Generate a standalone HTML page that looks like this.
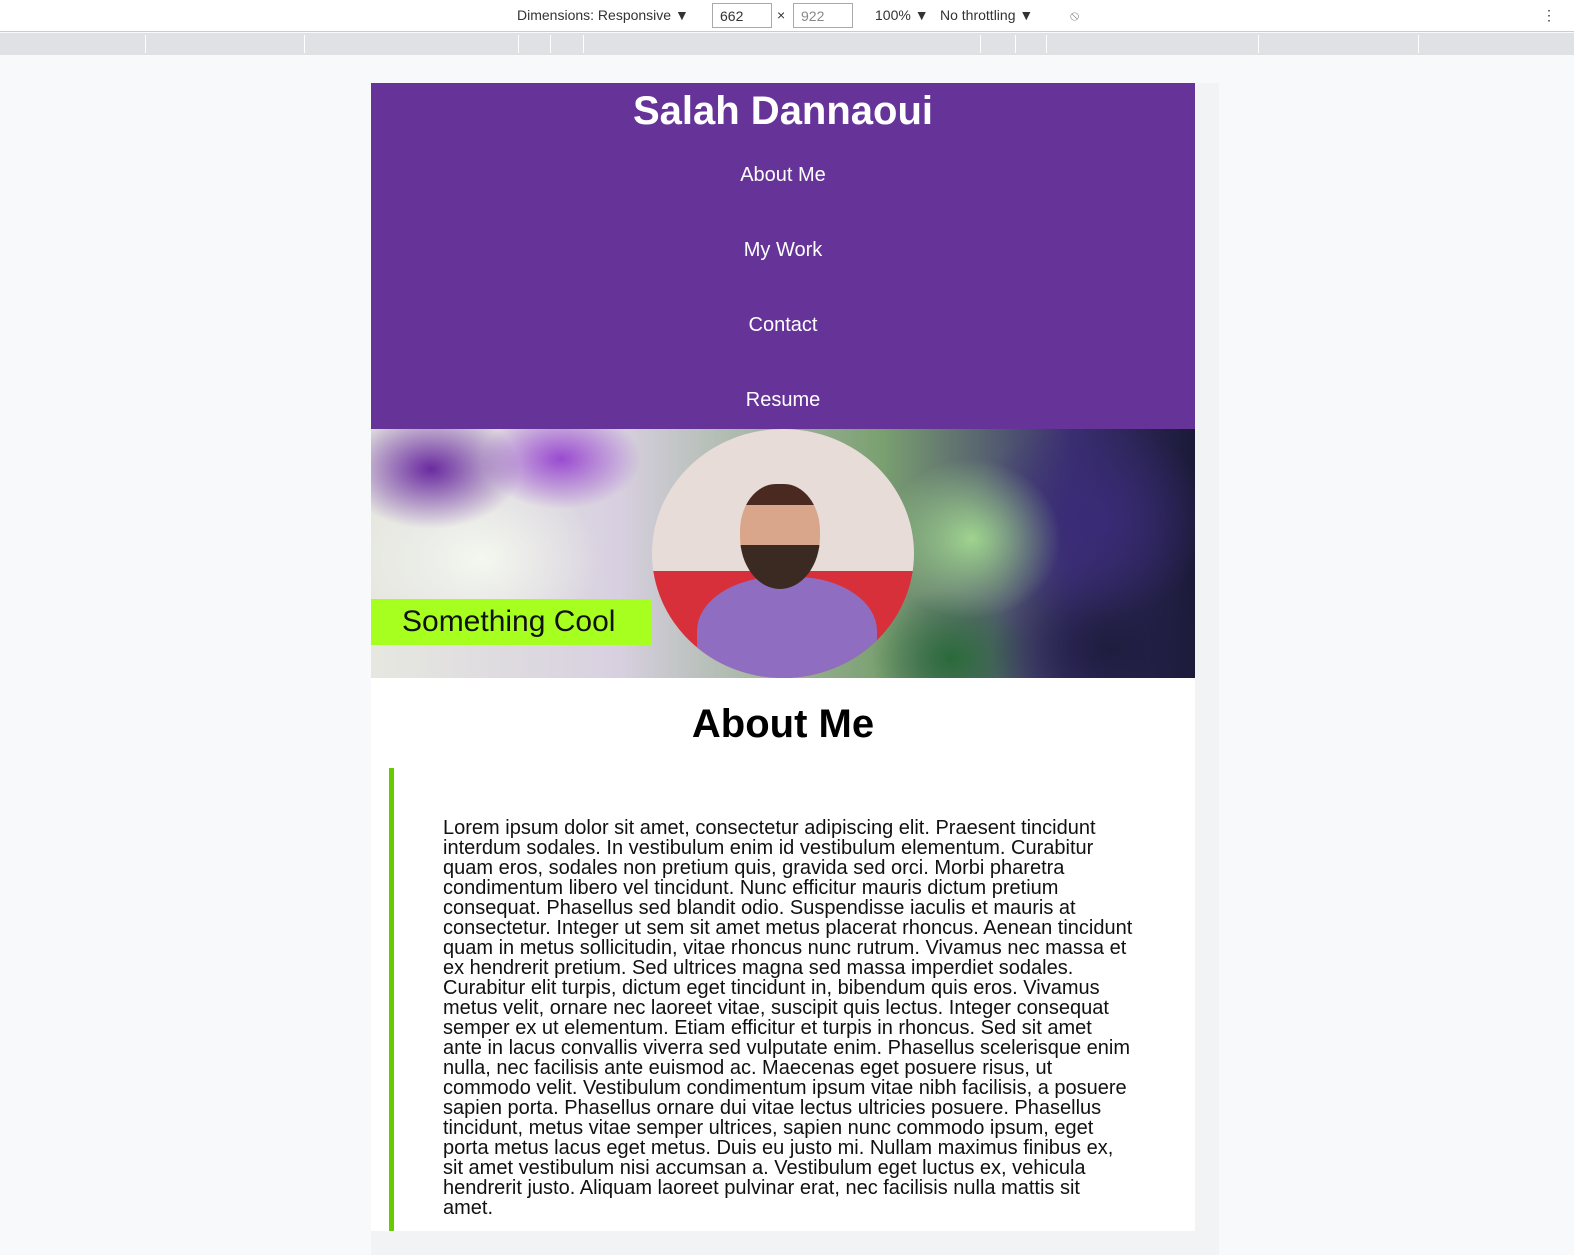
<!DOCTYPE html>
<html><head><meta charset="utf-8"><style>
*{margin:0;padding:0;box-sizing:border-box}
body{width:1574px;height:1255px;overflow:hidden;background:#f8f9fa;font-family:"Liberation Sans",Arial,sans-serif;position:relative}
.tb{position:absolute;top:0;left:0;width:1574px;height:32px;background:#fff;border-bottom:1px solid #ccc;font-size:14px;color:#333}
.tb span{position:absolute;top:7px}
.box{position:absolute;top:3px;height:25px;border:1px solid #aaa;padding:4px 7px;font-size:14px}
.ruler{position:absolute;top:33px;left:0;width:1574px;height:22px;background:#dfe1e5}
.ruler i{position:absolute;top:2px;width:1px;height:18px;background:#fff}
.frame{position:absolute;left:371px;top:83px;width:848px;height:1172px;background:#f1f3f4}
.page{position:absolute;left:371px;top:83px;width:824px;height:1148px;background:#fff;overflow:hidden}
header{height:346px;background:#663399;color:#fff;text-align:center}
h1{font-size:40px;font-weight:bold;padding-top:6px;line-height:44px}
nav a{display:block;font-size:20px;height:75px;line-height:23px;color:#fff}
.hero{position:relative;height:249px;background:
radial-gradient(ellipse 90px 60px at 60px 40px,#6a2aa0,transparent),
radial-gradient(ellipse 80px 50px at 190px 30px,#9a4ad0,transparent),
radial-gradient(ellipse 120px 90px at 110px 130px,#f4f7ef,transparent),
radial-gradient(ellipse 90px 80px at 600px 110px,#9fd48f,transparent),
radial-gradient(ellipse 120px 100px at 720px 90px,#3a2b78,transparent),
radial-gradient(ellipse 120px 90px at 740px 220px,#1e1d3e,transparent),
radial-gradient(ellipse 80px 70px at 580px 230px,#2a6a3a,transparent),
linear-gradient(90deg,#e6e8e0 0%,#d8d0e0 30%,#7aa070 62%,#3a2f70 85%,#1b1a38 100%)}
.face{position:absolute;left:281px;top:0;width:262px;height:249px;border-radius:50%;background:linear-gradient(#e8dcd8 0 57%,#d8303a 57% 100%);overflow:hidden}
.face .head{position:absolute;left:88px;top:55px;width:80px;height:105px;border-radius:45% 45% 50% 50%;background:linear-gradient(#4a2a20 0 20%,#d9a68c 20% 58%,#3b2a22 58%)}
.face .body{position:absolute;left:45px;top:148px;width:180px;height:120px;border-radius:45% 45% 0 0;background:#8f6ec2}
.cool{position:absolute;left:0;top:170px;width:280px;height:46px;background:#a6ff1f;font-size:30px;line-height:46px;padding-left:31px;color:#111}
h2{text-align:center;font-size:40px;margin-top:24px;line-height:44px}
.q{position:absolute;left:18px;top:685px;width:5px;height:470px;background:#66cc00}
p{position:absolute;left:72px;top:735px;width:690px;font-size:20px;line-height:20px;color:#111}
</style></head><body>
<div class="tb"><span style="left:517px">Dimensions: Responsive ▼</span>
<div class="box" style="left:712px;width:60px">662</div><span style="left:777px">×</span>
<div class="box" style="left:793px;width:60px;color:#888">922</div>
<span style="left:875px">100% ▼</span><span style="left:940px">No throttling ▼</span><span style="left:1070px;color:#888">⦸</span><span style="left:1542px">⋮</span></div>
<div class="ruler"><i style="left:145px"></i><i style="left:304px"></i><i style="left:518px"></i><i style="left:550px"></i><i style="left:583px"></i><i style="left:980px"></i><i style="left:1015px"></i><i style="left:1046px"></i><i style="left:1258px"></i><i style="left:1418px"></i></div>
<div class="frame"></div>
<div class="page">
<header><h1>Salah Dannaoui</h1>
<nav><a style="margin-top:31px">About Me</a><a>My Work</a><a>Contact</a><a>Resume</a></nav></header>
<div class="hero"><div class="face"><div class="body"></div><div class="head"></div></div><div class="cool">Something Cool</div></div>
<h2>About Me</h2>
<div class="q"></div>
<p>Lorem ipsum dolor sit amet, consectetur adipiscing elit. Praesent tincidunt interdum sodales. In vestibulum enim id vestibulum elementum. Curabitur quam eros, sodales non pretium quis, gravida sed orci. Morbi pharetra condimentum libero vel tincidunt. Nunc efficitur mauris dictum pretium consequat. Phasellus sed blandit odio. Suspendisse iaculis et mauris at consectetur. Integer ut sem sit amet metus placerat rhoncus. Aenean tincidunt quam in metus sollicitudin, vitae rhoncus nunc rutrum. Vivamus nec massa et ex hendrerit pretium. Sed ultrices magna sed massa imperdiet sodales. Curabitur elit turpis, dictum eget tincidunt in, bibendum quis eros. Vivamus metus velit, ornare nec laoreet vitae, suscipit quis lectus. Integer consequat semper ex ut elementum. Etiam efficitur et turpis in rhoncus. Sed sit amet ante in lacus convallis viverra sed vulputate enim. Phasellus scelerisque enim nulla, nec facilisis ante euismod ac. Maecenas eget posuere risus, ut commodo velit. Vestibulum condimentum ipsum vitae nibh facilisis, a posuere sapien porta. Phasellus ornare dui vitae lectus ultricies posuere. Phasellus tincidunt, metus vitae semper ultrices, sapien nunc commodo ipsum, eget porta metus lacus eget metus. Duis eu justo mi. Nullam maximus finibus ex, sit amet vestibulum nisi accumsan a. Vestibulum eget luctus ex, vehicula hendrerit justo. Aliquam laoreet pulvinar erat, nec facilisis nulla mattis sit amet.</p>
</div>
</body></html>
